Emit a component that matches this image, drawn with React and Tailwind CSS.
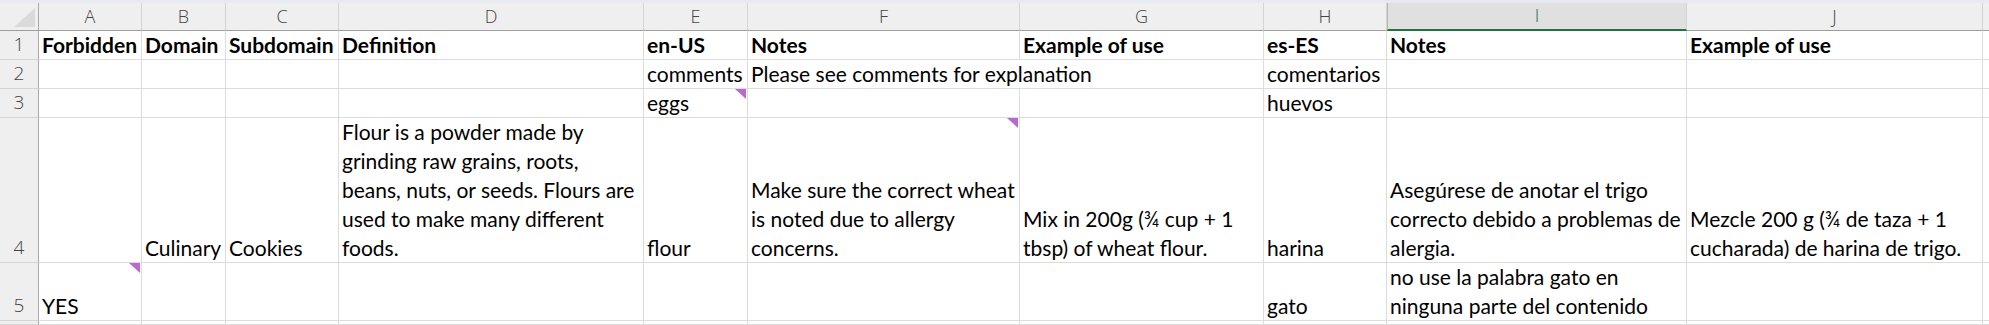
const columns = ["A", "B", "C", "D", "E", "F", "G", "H", "I", "J", ""];

const rows = [
  {
    n: 1,
    bold: true,
    cells: {
      A: ["Forbidden"],
      B: ["Domain"],
      C: ["Subdomain"],
      D: ["Definition"],
      E: ["en-US"],
      F: ["Notes"],
      G: ["Example of use"],
      H: ["es-ES"],
      I: ["Notes"],
      J: ["Example of use"],
    },
  },
  {
    n: 2,
    cells: {
      E: ["comments"],
      F: ["Please see comments for explanation"],
      H: ["comentarios"],
    },
    spanF: true,
  },
  {
    n: 3,
    cells: { E: ["eggs"], H: ["huevos"] },
    comments: ["E"],
  },
  {
    n: 4,
    cells: {
      B: ["Culinary"],
      C: ["Cookies"],
      D: [
        "Flour is a powder made by",
        "grinding raw grains, roots,",
        "beans, nuts, or seeds. Flours are",
        "used to make many different",
        "foods.",
      ],
      E: ["flour"],
      F: ["Make sure the correct wheat", "is noted due to allergy", "concerns."],
      G: ["Mix in 200g (¾ cup + 1", "tbsp) of wheat flour."],
      H: ["harina"],
      I: ["Asegúrese de anotar el trigo", "correcto debido a problemas de", "alergia."],
      J: ["Mezcle 200 g (¾ de taza + 1", "cucharada) de harina de trigo."],
    },
    comments: ["F"],
  },
  {
    n: 5,
    cells: {
      A: ["YES"],
      H: ["gato"],
      I: ["no use la palabra gato en", "ninguna parte del contenido"],
    },
    comments: ["A"],
  },
  { n: "", cells: {} },
];

const CommentMark = () => (
  <svg className="absolute top-0 right-[1px]" width="11" height="10" viewBox="0 0 11 10">
    <polygon points="0,0 11,0 11,10" fill="#b96ad0" />
  </svg>
);

const Cell = ({ lines = [], bold, comment, span }) => (
  <div
    className={`relative flex flex-col justify-end px-[3px] border-r border-b border-[#dcdcdc] text-[21px] leading-[29px] text-black whitespace-nowrap ${
      bold ? "font-bold" : ""
    } ${span ? "col-span-2" : ""}`}
  >
    {lines.map((line, i) => (
      <span key={i}>{line}</span>
    ))}
    {comment && <CommentMark />}
  </div>
);

export default function App() {
  return (
    <div className="w-[1989px] h-[325px] overflow-hidden bg-white [font-family:Lato,'Liberation_Sans',sans-serif]">
      <div className="h-[3px] bg-[#e7ebef]" />
      <div className="grid grid-cols-[39px_103px_84px_113px_305px_104px_272px_244px_123px_300px_296px_1fr] grid-rows-[28px_29px_29px_29px_145px_58px_1fr] h-[322px]">
        {/* corner */}
        <div className="flex items-end justify-end pr-[3px] pb-[3px] bg-[#efefef] border-r border-b border-r-[#a8a8a8] border-b-[#9e9e9e]">
          <svg width="21" height="19" viewBox="0 0 21 19">
            <polygon points="0,19 21,19 21,0" fill="#dadada" />
          </svg>
        </div>

        {/* column letters */}
        {columns.map((col) => {
          const selected = col === "I";
          return (
            <div
              key={col || "rest"}
              className={`flex items-end justify-center pb-[2px] border-r border-r-[#d4d4d4] text-[18px] leading-[24px] [font-family:'Open_Sans',sans-serif] font-light ${
                selected
                  ? "bg-[#e0e0e0] border-b-2 border-b-[#217346] text-[#217346] border-l border-l-[#b5b5b5]"
                  : "bg-[#efefef] border-b border-b-[#9e9e9e] text-[#444]"
              }`}
            >
              {col}
            </div>
          );
        })}

        {rows.map((row) => (
          <div key={row.n || "last"} className="contents">
            <div className="flex items-end justify-center bg-[#efefef] border-r border-b border-r-[#a8a8a8] border-b-[#d4d4d4] text-[19px] leading-[29px] text-[#444] [font-family:'Open_Sans',sans-serif] font-light">
              {row.n}
            </div>
            {columns.map((col) => {
              if (row.spanF && col === "G") return null;
              return (
                <Cell
                  key={col || "rest"}
                  lines={row.cells[col]}
                  bold={row.bold}
                  comment={row.comments?.includes(col)}
                  span={row.spanF && col === "F"}
                />
              );
            })}
          </div>
        ))}
      </div>
    </div>
  );
}
